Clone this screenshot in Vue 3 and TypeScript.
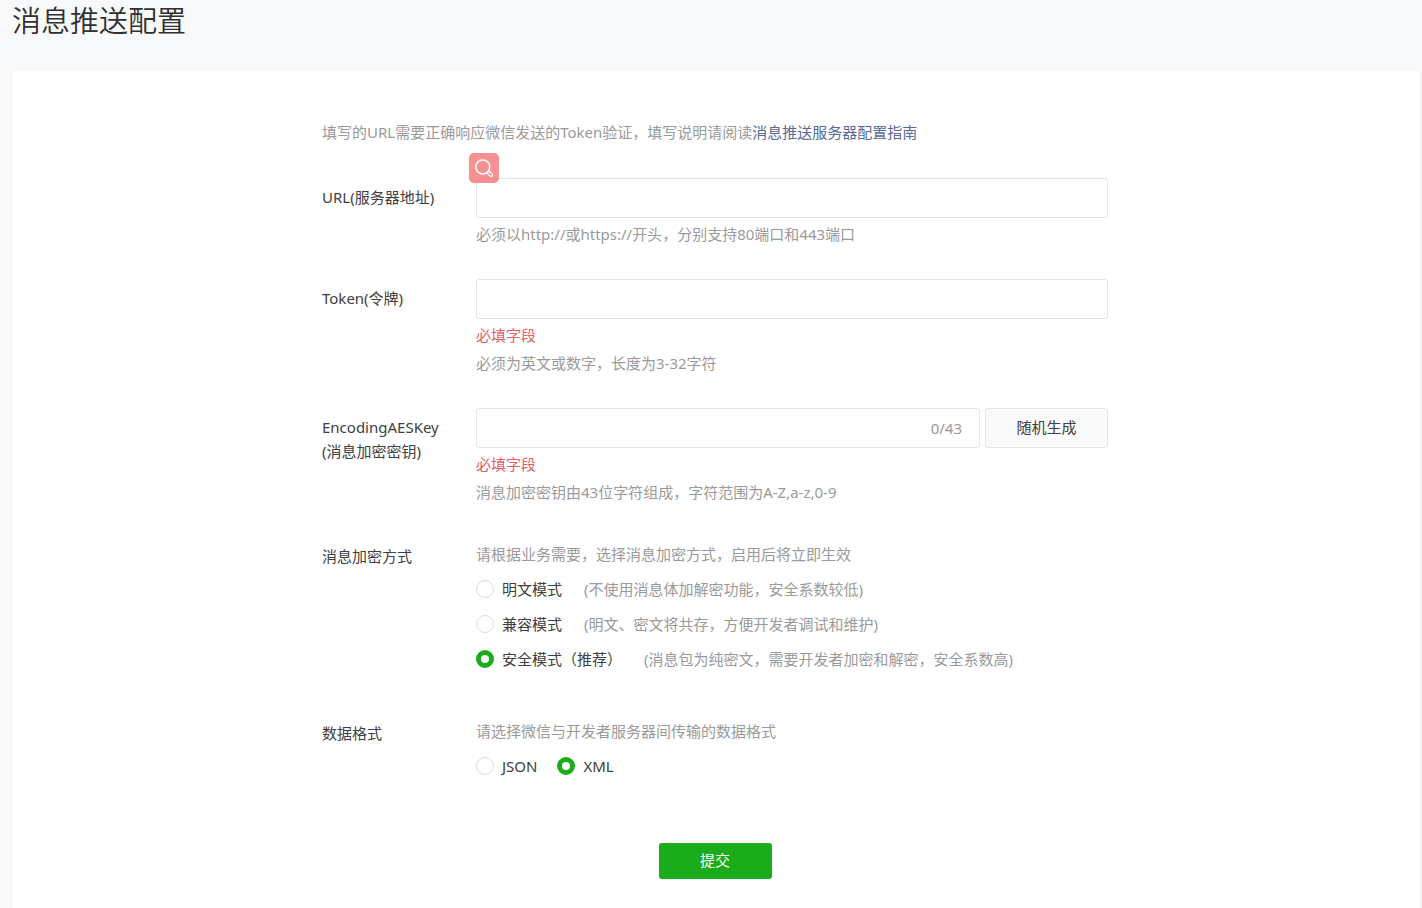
<script setup lang="ts">
import { computed, ref } from 'vue'

interface Option {
  value: string
  label: string
  note?: string
}

const KEY_LENGTH = 43

const url = ref('')
const token = ref('')
const aesKey = ref('')
const mode = ref('safe')
const format = ref('xml')

const keyCount = computed(() => `${aesKey.value.length}/${KEY_LENGTH}`)

const modes: Option[] = [
  { value: 'plain', label: '明文模式', note: '(不使用消息体加解密功能，安全系数较低)' },
  { value: 'compat', label: '兼容模式', note: '(明文、密文将共存，方便开发者调试和维护)' },
  { value: 'safe', label: '安全模式（推荐）', note: '(消息包为纯密文，需要开发者加密和解密，安全系数高)' },
]

const formats: Option[] = [
  { value: 'json', label: 'JSON' },
  { value: 'xml', label: 'XML' },
]

function generateKey(): void {
  const chars = 'ABCDEFGHIJKLMNOPQRSTUVWXYZabcdefghijklmnopqrstuvwxyz0123456789'
  aesKey.value = Array.from(
    { length: KEY_LENGTH },
    () => chars[Math.floor(Math.random() * chars.length)],
  ).join('')
}
</script>

<template>
  <main class="page">
    <h1 class="title">消息推送配置</h1>

    <section class="card">
      <form class="form" @submit.prevent>
        <p class="intro">
          填写的URL需要正确响应微信发送的Token验证，填写说明请阅读<a class="link" href="#guide">消息推送服务器配置指南</a>
        </p>

        <div class="row">
          <label class="label" for="url">URL(服务器地址)</label>
          <div class="field">
            <div class="box">
              <input id="url" v-model="url" class="input" type="text" />
            </div>
            <p class="hint">必须以http://或https://开头，分别支持80端口和443端口</p>
            <button class="search" type="button" aria-label="搜索">
              <svg viewBox="0 0 30 30" width="30" height="30" fill="none" stroke="#fff" stroke-linecap="round" stroke-linejoin="round">
                <circle cx="13.8" cy="14" r="7" stroke-width="1.6" />
                <path d="M17.6 19.8 19.7 17.8 23.2 21.1Q24 22.2 23.1 23.1 22.1 23.9 21.1 23.1Z" stroke-width="1.3" />
              </svg>
            </button>
          </div>
        </div>

        <div class="row">
          <label class="label" for="token">Token(令牌)</label>
          <div class="field">
            <div class="box">
              <input id="token" v-model="token" class="input" type="text" />
            </div>
            <p class="error">必填字段</p>
            <p class="hint">必须为英文或数字，长度为3-32字符</p>
          </div>
        </div>

        <div class="row">
          <label class="label" for="aes-key">EncodingAESKey<br />(消息加密密钥)</label>
          <div class="field">
            <div class="key-line">
              <div class="box">
                <input id="aes-key" v-model="aesKey" class="input" type="text" :maxlength="KEY_LENGTH" />
                <span class="count">{{ keyCount }}</span>
              </div>
              <button class="generate" type="button" @click="generateKey">随机生成</button>
            </div>
            <p class="error">必填字段</p>
            <p class="hint">消息加密密钥由43位字符组成，字符范围为A-Z,a-z,0-9</p>
          </div>
        </div>

        <div class="row row-choice">
          <span id="mode-label" class="label">消息加密方式</span>
          <div class="choices" role="radiogroup" aria-labelledby="mode-label">
            <p class="hint">请根据业务需要，选择消息加密方式，启用后将立即生效</p>
            <label v-for="item in modes" :key="item.value" class="option">
              <input v-model="mode" class="radio" type="radio" name="mode" :value="item.value" />
              <span>{{ item.label }}</span>
              <span class="note">{{ item.note }}</span>
            </label>
          </div>
        </div>

        <div class="row row-format">
          <span id="format-label" class="label">数据格式</span>
          <div class="choices" role="radiogroup" aria-labelledby="format-label">
            <p class="hint">请选择微信与开发者服务器间传输的数据格式</p>
            <div class="inline">
              <label v-for="item in formats" :key="item.value" class="option">
                <input v-model="format" class="radio" type="radio" name="format" :value="item.value" />
                <span>{{ item.label }}</span>
              </label>
            </div>
          </div>
        </div>

        <button class="submit" type="submit">提交</button>
      </form>
    </section>
  </main>
</template>

<style>
body {
  margin: 0;
  background: #f8f9fb;
}
</style>

<style scoped>
.page {
  box-sizing: border-box;
  display: flex;
  flex-direction: column;
  min-height: 100vh;
  padding: 0 2px 0 12px;
  background: #f8f9fb;
  color: #404040;
  font-family: "Noto Sans", "Noto Sans CJK SC", sans-serif;
  font-size: 15px;
  font-weight: 400;
  line-height: 24px;
}

.title {
  margin: 0 0 28px;
  color: #303030;
  font-size: 29px;
  font-weight: 350;
  line-height: 42px;
}

.card {
  flex: 1;
  padding: 50px 26px 29px 24px;
  border-radius: 4px 4px 0 0;
  background: #fff;
  box-shadow: 0 1px 3px rgba(0, 0, 0, 0.08);
}

.form {
  display: flex;
  flex-direction: column;
  max-width: 786px;
  margin: 0 auto;
}

p {
  margin: 0;
}

.intro {
  margin-bottom: 34px;
  color: #9a9a9a;
}

.link {
  color: #576b95;
  text-decoration: none;
}

.row {
  display: grid;
  grid-template-columns: 154px 1fr;
  align-items: start;
  margin-bottom: 33px;
}

.label {
  padding-top: 7px;
}

.field {
  position: relative;
  display: flex;
  flex-direction: column;
  gap: 4px;
}

.box {
  box-sizing: border-box;
  display: flex;
  flex: 1;
  align-items: center;
  min-width: 0;
  height: 40px;
  padding: 0 17px 0 10px;
  border: 1px solid #e4e5e9;
  border-radius: 3px;
  background: #fff;
}

.field > .box {
  flex: none;
}

.input {
  flex: 1;
  min-width: 0;
  height: 100%;
  padding: 0;
  border: 0;
  outline: 0;
  background: transparent;
  color: inherit;
  font: inherit;
}

.count {
  color: #9a9a9a;
}

.key-line {
  display: flex;
  gap: 5px;
}

.generate {
  width: 123px;
  height: 40px;
  padding: 0 0 2px;
  border: 1px solid #e4e5e9;
  border-radius: 3px;
  background: #fafafa;
  color: inherit;
  font: inherit;
}

.hint,
.note {
  color: #9a9a9a;
}

.error {
  color: #e15f63;
}

.search {
  position: absolute;
  top: -25px;
  left: -7px;
  width: 30px;
  height: 30px;
  padding: 0;
  border: 0;
  border-radius: 5px;
  background: rgba(244, 108, 108, 0.75);
}

.search svg {
  display: block;
}

.row-choice {
  margin: 5px 0 48px;
}

.row-format {
  margin-bottom: 65px;
}

.row-choice .label,
.row-format .label {
  padding-top: 2px;
}

.choices {
  display: flex;
  flex-direction: column;
  gap: 11px;
}

.inline {
  display: flex;
  gap: 20px;
}

.option {
  display: flex;
  align-items: center;
  gap: 8px;
}

.note {
  margin-left: 14px;
}

.radio {
  box-sizing: border-box;
  flex: none;
  width: 18px;
  height: 18px;
  margin: 0;
  border: 1px solid #dcdcdc;
  border-radius: 50%;
  background: #fff;
  appearance: none;
}

.radio:checked {
  border: 5px solid #1aad19;
}

.submit {
  align-self: center;
  width: 113px;
  height: 36px;
  padding: 0 0 2px;
  border: 0;
  border-radius: 3px;
  background: #1aad19;
  color: #fff;
  font: inherit;
}
</style>
